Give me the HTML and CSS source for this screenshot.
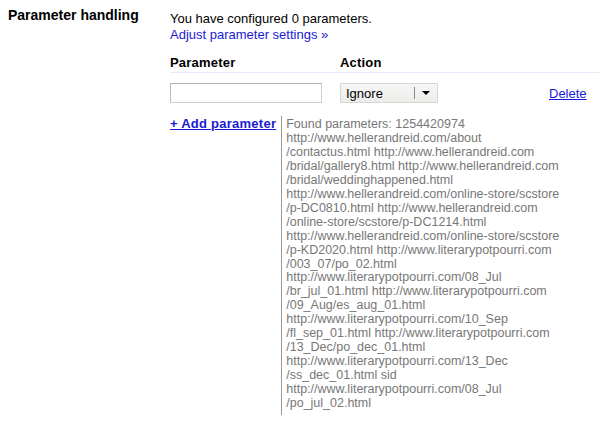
FILE: index.html
```html
<!DOCTYPE html>
<html>
<head>
<meta charset="utf-8">
<link rel="stylesheet" href="styles.css">
</head>
<body>
<div class="section">
  <div class="label">Parameter handling</div>
  <div class="content">
    <div class="summary">You have configured 0 parameters.</div>
    <a class="adjust" href="#">Adjust parameter settings »</a>
    <div class="table">
      <div class="thead">
        <div class="col-param">Parameter</div>
        <div class="col-action">Action</div>
      </div>
      <div class="trow">
        <div class="col-param"><input class="param-input" type="text"></div>
        <div class="col-action">
          <div class="select"><span class="sel-text">Ignore</span><span class="sel-sep"></span><span class="sel-arrow"></span></div>
        </div>
        <a class="delete" href="#">Delete</a>
      </div>
      <div class="addrow">
        <a class="add" href="#">+ Add parameter</a>
        <div class="found">Found parameters: 1254420974<br>http://www.hellerandreid.com/about<br>/contactus.html http://www.hellerandreid.com<br>/bridal/gallery8.html http://www.hellerandreid.com<br>/bridal/weddinghappened.html<br>http://www.hellerandreid.com/online-store/scstore<br>/p-DC0810.html http://www.hellerandreid.com<br>/online-store/scstore/p-DC1214.html<br>http://www.hellerandreid.com/online-store/scstore<br>/p-KD2020.html http://www.literarypotpourri.com<br>/003_07/po_02.html<br>http://www.literarypotpourri.com/08_Jul<br>/br_jul_01.html http://www.literarypotpourri.com<br>/09_Aug/es_aug_01.html<br>http://www.literarypotpourri.com/10_Sep<br>/fl_sep_01.html http://www.literarypotpourri.com<br>/13_Dec/po_dec_01.html<br>http://www.literarypotpourri.com/13_Dec<br>/ss_dec_01.html sid<br>http://www.literarypotpourri.com/08_Jul<br>/po_jul_02.html</div>
      </div>
    </div>
  </div>
</div>
</body>
</html>
```

FILE: styles.css
```css
html, body {
  margin: 0;
  padding: 0;
  background: #fff;
}
body {
  font-family: "Liberation Sans", Arial, sans-serif;
  font-size: 13px;
  color: #000;
}
.section {
  display: flex;
  padding: 7px 8px 0 8px;
}
.label {
  width: 162px;
  flex: none;
  font-weight: bold;
  font-size: 14px;
  line-height: 16px;
}
.content {
  flex: 1;
  padding-top: 4px;
}
.summary {
  line-height: 16px;
}
.adjust {
  display: block;
  color: #1a1ad6;
  text-decoration: none;
  line-height: 16px;
}
.table {
  margin-top: 12px;
  width: 430px;
}
.thead {
  display: flex;
  font-weight: bold;
  line-height: 16px;
  padding-bottom: 1px;
  border-bottom: 1px solid #e5ecf9;
  letter-spacing: 0.2px;
}
.col-param {
  width: 170px;
  flex: none;
}
.col-action {
  width: 209px;
  flex: none;
}
.trow {
  display: flex;
  align-items: center;
  padding-top: 10px;
  height: 20px;
}
.param-input {
  box-sizing: border-box;
  width: 152px;
  height: 20px;
  margin: 0;
  padding: 0 3px;
  border: 1px solid #cfcfcf;
  border-top-color: #b0b0b0;
  border-left-color: #bcbcbc;
  background: #fff;
  font: 13px "Liberation Sans", Arial, sans-serif;
}
.select {
  box-sizing: border-box;
  width: 98px;
  height: 20px;
  display: flex;
  align-items: center;
  border: 1px solid #d6d6d2;
  border-radius: 1px;
  background: linear-gradient(#f6f6f4, #ececea);
  font-size: 13px;
}
.sel-text {
  flex: 1;
  padding-left: 5px;
}
.sel-sep {
  width: 1px;
  height: 12px;
  background: #888;
}
.sel-arrow {
  width: 0;
  height: 0;
  margin: 0 7px 0 7px;
  border-left: 4px solid transparent;
  border-right: 4px solid transparent;
  border-top: 4px solid #000;
}
.delete {
  color: #1a1ad6;
  text-decoration: underline;
  margin-left: auto;
  margin-right: 14px;
  padding-top: 1px;
}
.addrow {
  display: flex;
  margin-top: 13px;
  align-items: flex-start;
}
.add {
  color: #1a1ad6;
  font-weight: bold;
  text-decoration: underline;
  line-height: 16px;
  white-space: nowrap;
  padding-right: 5px;
  letter-spacing: 0.25px;
}
.found {
  border-left: 1px solid #999;
  padding-left: 4px;
  padding-top: 2px;
  color: #777;
  font-size: 12.5px;
  line-height: 13.95px;
  padding-bottom: 4px;
}
```
